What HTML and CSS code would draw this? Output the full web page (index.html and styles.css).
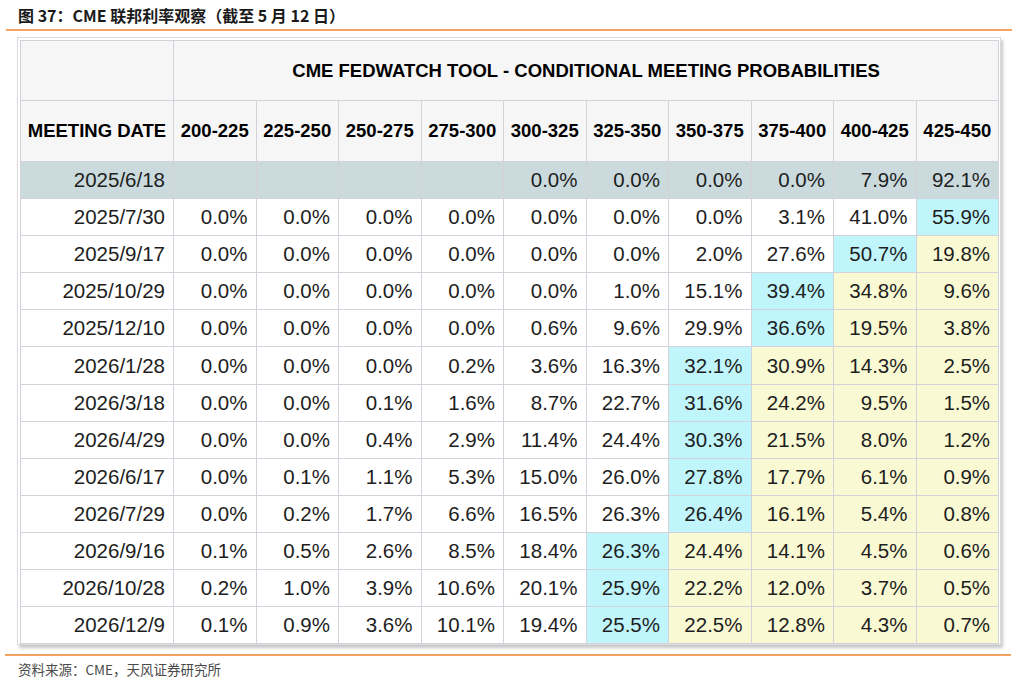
FILE: index.html
```html
<!DOCTYPE html>
<html lang="zh">
<head>
<meta charset="utf-8">
<title>图 37：CME 联邦利率观察</title>
<link rel="stylesheet" href="styles.css">
</head>
<body>
<div class="page">
  <div class="fig-title">图 37：CME 联邦利率观察（截至 5 月 12 日）</div>
  <div class="rule"></div>
  <div class="frame">
    <table class="grid">
      <colgroup>
        <col class="c-date">
        <col class="c-num"><col class="c-num"><col class="c-num"><col class="c-num"><col class="c-num">
        <col class="c-num"><col class="c-num"><col class="c-num"><col class="c-num"><col class="c-num">
      </colgroup>
      <thead>
        <tr class="h1"><th></th><th colspan="10">CME FEDWATCH TOOL - CONDITIONAL MEETING PROBABILITIES</th></tr>
        <tr class="h2"><th>MEETING DATE</th><th>200-225</th><th>225-250</th><th>250-275</th><th>275-300</th><th>300-325</th><th>325-350</th><th>350-375</th><th>375-400</th><th>400-425</th><th>425-450</th></tr>
      </thead>
      <tbody>
        <tr class="cur"><td>2025/6/18</td><td></td><td></td><td></td><td></td><td>0.0%</td><td>0.0%</td><td>0.0%</td><td>0.0%</td><td>7.9%</td><td>92.1%</td></tr>
        <tr><td>2025/7/30</td><td>0.0%</td><td>0.0%</td><td>0.0%</td><td>0.0%</td><td>0.0%</td><td>0.0%</td><td>0.0%</td><td>3.1%</td><td>41.0%</td><td class="c">55.9%</td></tr>
        <tr><td>2025/9/17</td><td>0.0%</td><td>0.0%</td><td>0.0%</td><td>0.0%</td><td>0.0%</td><td>0.0%</td><td>2.0%</td><td>27.6%</td><td class="c">50.7%</td><td class="y">19.8%</td></tr>
        <tr><td>2025/10/29</td><td>0.0%</td><td>0.0%</td><td>0.0%</td><td>0.0%</td><td>0.0%</td><td>1.0%</td><td>15.1%</td><td class="c">39.4%</td><td class="y">34.8%</td><td class="y">9.6%</td></tr>
        <tr><td>2025/12/10</td><td>0.0%</td><td>0.0%</td><td>0.0%</td><td>0.0%</td><td>0.6%</td><td>9.6%</td><td>29.9%</td><td class="c">36.6%</td><td class="y">19.5%</td><td class="y">3.8%</td></tr>
        <tr><td>2026/1/28</td><td>0.0%</td><td>0.0%</td><td>0.0%</td><td>0.2%</td><td>3.6%</td><td>16.3%</td><td class="c">32.1%</td><td class="y">30.9%</td><td class="y">14.3%</td><td class="y">2.5%</td></tr>
        <tr><td>2026/3/18</td><td>0.0%</td><td>0.0%</td><td>0.1%</td><td>1.6%</td><td>8.7%</td><td>22.7%</td><td class="c">31.6%</td><td class="y">24.2%</td><td class="y">9.5%</td><td class="y">1.5%</td></tr>
        <tr><td>2026/4/29</td><td>0.0%</td><td>0.0%</td><td>0.4%</td><td>2.9%</td><td>11.4%</td><td>24.4%</td><td class="c">30.3%</td><td class="y">21.5%</td><td class="y">8.0%</td><td class="y">1.2%</td></tr>
        <tr><td>2026/6/17</td><td>0.0%</td><td>0.1%</td><td>1.1%</td><td>5.3%</td><td>15.0%</td><td>26.0%</td><td class="c">27.8%</td><td class="y">17.7%</td><td class="y">6.1%</td><td class="y">0.9%</td></tr>
        <tr><td>2026/7/29</td><td>0.0%</td><td>0.2%</td><td>1.7%</td><td>6.6%</td><td>16.5%</td><td>26.3%</td><td class="c">26.4%</td><td class="y">16.1%</td><td class="y">5.4%</td><td class="y">0.8%</td></tr>
        <tr><td>2026/9/16</td><td>0.1%</td><td>0.5%</td><td>2.6%</td><td>8.5%</td><td>18.4%</td><td class="c">26.3%</td><td class="y">24.4%</td><td class="y">14.1%</td><td class="y">4.5%</td><td class="y">0.6%</td></tr>
        <tr><td>2026/10/28</td><td>0.2%</td><td>1.0%</td><td>3.9%</td><td>10.6%</td><td>20.1%</td><td class="c">25.9%</td><td class="y">22.2%</td><td class="y">12.0%</td><td class="y">3.7%</td><td class="y">0.5%</td></tr>
        <tr><td>2026/12/9</td><td>0.1%</td><td>0.9%</td><td>3.6%</td><td>10.1%</td><td>19.4%</td><td class="c">25.5%</td><td class="y">22.5%</td><td class="y">12.8%</td><td class="y">4.3%</td><td class="y">0.7%</td></tr>
      </tbody>
    </table>
  </div>
  <div class="rule bottom"></div>
  <div class="source">资料来源：CME，天风证券研究所</div>
</div>
</body>
</html>
```

FILE: styles.css
```css
html, body {
  margin: 0;
  padding: 0;
  background: #ffffff;
}

.page {
  width: 1017px;
  height: 684px;
  display: flex;
  flex-direction: column;
}

.fig-title {
  height: 29px;
  display: flex;
  align-items: center;
  padding-left: 18px;
  font-family: "Noto Sans CJK SC", "Liberation Sans", sans-serif;
  font-weight: 700;
  font-size: 16px;
  color: #1a1a1a;
  box-sizing: border-box;
}

.rule {
  height: 2px;
  margin-left: 6px;
  width: 1006px;
  background: #f5a35e;
  flex: none;
}

.rule.bottom {
  margin-left: 5px;
  margin-top: 9px;
}

.frame {
  margin-top: 6px;
  margin-left: 17px;
  width: 980px;
  border: 1px solid #dcdce0;
  padding: 2px 0 0 2px;
  box-shadow: 2px 3px 3px rgba(0, 0, 0, 0.22);
  background: #ffffff;
}

.grid {
  border-collapse: collapse;
  table-layout: fixed;
  width: 978px;
  font-family: "Liberation Sans", Arial, sans-serif;
}

.c-date { width: 153px; }
.c-num { width: 82.5px; }

.grid th,
.grid td {
  border: 1px solid #d2d2da;
  padding: 0 8px 0 0;
  white-space: nowrap;
}

.grid th {
  background: #f6f6f6;
  font-weight: 700;
  font-size: 18.5px;
  color: #000000;
  text-align: center;
  padding: 0;
}

.h1 { height: 60px; }
.h2 { height: 61px; }

.grid td {
  font-size: 20.5px;
  color: #1e1e1e;
  text-align: right;
  background: #ffffff;
}

.grid tbody tr { height: 37.1px; }

.grid tr.cur td { background: #cbdadd; }
.grid td.c { background: #bff5fb; }
.grid td.y { background: #f9f9d3; }

.source {
  padding-left: 18px;
  margin-top: 4px;
  font-family: "Noto Sans CJK SC", "Liberation Sans", sans-serif;
  font-size: 13.5px;
  color: #4a4a4a;
  line-height: 18px;
}
```
